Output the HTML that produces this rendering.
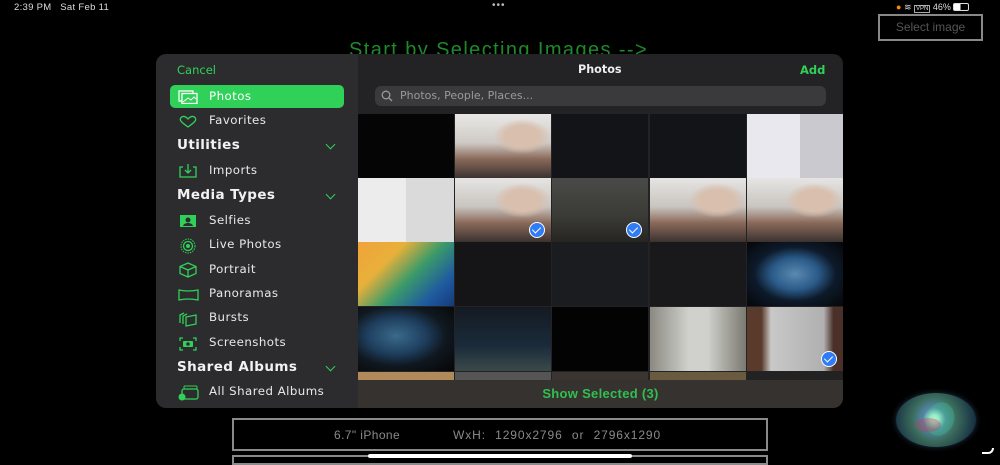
<!DOCTYPE html>
<html><head><meta charset="utf-8"><style>
*{margin:0;padding:0;box-sizing:border-box}
body{width:1000px;height:462px;background:#000;position:relative;overflow:hidden;font-family:"Liberation Sans",sans-serif;color:#fff}
.abs{position:absolute}
.sb{left:156px;top:54px;width:202px;height:354px;background:#2c2c2e;border-radius:10px 0 0 10px}
.main{left:358px;top:54px;width:485px;height:354px;background:#232325;border-radius:0 10px 10px 0;overflow:hidden}
.it{position:absolute;left:209px;font-family:"DejaVu Sans",sans-serif;font-size:11.8px;letter-spacing:.45px;color:#e8e8e8}
.hd{position:absolute;left:177px;font-family:"DejaVu Sans",sans-serif;font-size:13.5px;letter-spacing:.4px;font-weight:bold;color:#f2f2f2}
.chev{position:absolute;left:327px;width:7px;height:7px;border-right:1.5px solid #30d158;border-bottom:1.5px solid #30d158;transform:rotate(45deg)}
.ic{position:absolute;left:178px}
.c{position:absolute;width:96px;height:64px}
.chk{position:absolute;right:6px;bottom:4px;width:16px;height:16px;border-radius:50%;background:#2f7cf6;border:1.5px solid #fff}
.chk:after{content:"";position:absolute;left:4px;top:2px;width:4px;height:7px;border-right:1.5px solid #fff;border-bottom:1.5px solid #fff;transform:rotate(45deg)}
</style></head><body>
<div class="abs" style="left:14px;top:2px;font-size:9.5px;color:#ddd;letter-spacing:.3px">2:39 PM&nbsp;&nbsp;&nbsp;Sat Feb 11</div>
<div class="abs" style="left:492px;top:0px;font-size:10px;color:#bbb;letter-spacing:1px">•••</div>
<div class="abs" style="left:896px;top:2px;font-size:9px;color:#ddd"><span style="color:#f80">●</span> ≋ <span style="border:1px solid #aaa;font-size:6px;padding:0 1px">VPN</span> 46% <span style="display:inline-block;width:16px;height:8px;border:1px solid #ddd;border-radius:2px;vertical-align:-1px;background:linear-gradient(90deg,#fff 46%,transparent 46%)"></span></div>
<div class="abs" style="left:878px;top:14px;width:105px;height:27px;border:2px solid #888;color:#555;font-size:12px;text-align:center;line-height:23px">Select image</div>
<div class="abs" style="left:349px;top:39px;font-size:20px;letter-spacing:1.4px;color:#1f8a2a">Start by Selecting Images --&gt;</div>

<div class="abs sb"></div>
<div class="abs main">
<div class="abs" style="left:17px;top:32px;width:451px;height:20px;background:#3a3a3c;border-radius:6px;font-family:'DejaVu Sans',sans-serif;font-size:11px;color:#9a9a9e;line-height:20px;padding-left:25px">Photos, People, Places...</div>
<svg class="abs" style="left:23px;top:36px" width="12" height="12"><circle cx="5" cy="5" r="3.8" fill="none" stroke="#9a9a9e" stroke-width="1.3"/><line x1="8" y1="8" x2="11" y2="11" stroke="#9a9a9e" stroke-width="1.3"/></svg>
</div>
<div class="abs" style="left:177px;top:63px;font-family:'DejaVu Sans',sans-serif;font-size:11.5px;color:#30d158">Cancel</div>
<div class="abs" style="left:578px;top:63px;font-family:'DejaVu Sans',sans-serif;font-size:11.2px;font-weight:bold;color:#eee">Photos</div>
<div class="abs" style="left:800px;top:63px;font-family:'DejaVu Sans',sans-serif;font-size:11.5px;font-weight:bold;color:#30d158">Add</div>

<div class="abs" style="left:170px;top:85px;width:174px;height:23px;background:#30d158;border-radius:5px"></div>
<svg class="ic" style="top:90px" width="22" height="14"><rect x="1" y="1" width="14" height="10" fill="none" stroke="#fff" stroke-width="1.3"/><rect x="4" y="3.5" width="15" height="10" fill="#30d158" stroke="#fff" stroke-width="1.3"/><path d="M5 12 L10 8 L13 10 L16 7 L18 9" fill="none" stroke="#fff"/></svg>
<div class="it" style="top:89px;color:#fff">Photos</div>
<svg class="ic" style="top:115px" width="20" height="14"><path d="M10 12 C3 7 1 5 3 2.5 C5 0.5 8 1.5 10 4 C12 1.5 15 0.5 17 2.5 C19 5 17 7 10 12Z" fill="none" stroke="#30d158" stroke-width="1.3"/></svg>
<div class="it" style="top:113px">Favorites</div>
<div class="hd" style="top:137px">Utilities</div><div class="chev" style="top:141px"></div>
<svg class="ic" style="top:163px" width="20" height="16"><path d="M5 4 H2 V14 H18 V4 H15 M10 1 V10 M7 7 L10 10 L13 7" fill="none" stroke="#30d158" stroke-width="1.3"/></svg>
<div class="it" style="top:163px">Imports</div>
<div class="hd" style="top:187px">Media Types</div><div class="chev" style="top:191px"></div>
<svg class="ic" style="top:213px" width="20" height="16"><rect x="2" y="2" width="16" height="12" fill="#30d158"/><circle cx="10" cy="7" r="2.5" fill="#2c2c2e"/><path d="M5 13 C6 9 14 9 15 13Z" fill="#2c2c2e"/></svg>
<div class="it" style="top:213px">Selfies</div>
<svg class="ic" style="top:238px" width="20" height="16"><circle cx="10" cy="8" r="7" fill="none" stroke="#30d158" stroke-dasharray="1.5 1"/><circle cx="10" cy="8" r="4.5" fill="none" stroke="#30d158" stroke-width="1.3"/><circle cx="10" cy="8" r="2" fill="#30d158"/></svg>
<div class="it" style="top:237px">Live Photos</div>
<svg class="ic" style="top:262px" width="20" height="16"><path d="M10 1 L18 4.5 V11.5 L10 15 L2 11.5 V4.5Z M2 4.5 L10 8 L18 4.5 M10 8 V15" fill="none" stroke="#30d158" stroke-width="1.3"/></svg>
<div class="it" style="top:262px">Portrait</div>
<svg class="ic" style="top:288px" width="22" height="14"><path d="M1 2 Q10 4 20 2 V12 Q10 10 1 12Z" fill="none" stroke="#30d158" stroke-width="1.3"/></svg>
<div class="it" style="top:286px">Panoramas</div>
<svg class="ic" style="top:311px" width="20" height="16"><path d="M2 12 V4 L6 2 M5 13 V5 L9 3 M8 15 V6 L18 4 V13 Z" fill="none" stroke="#30d158" stroke-width="1.3"/></svg>
<div class="it" style="top:310px">Bursts</div>
<svg class="ic" style="top:336px" width="20" height="16"><path d="M2 5 V2 H5 M15 2 H18 V5 M18 11 V14 H15 M5 14 H2 V11" fill="none" stroke="#30d158" stroke-width="1.3"/><rect x="5" y="5" width="10" height="6" rx="1" fill="#30d158"/><circle cx="10" cy="8" r="1.8" fill="#2c2c2e"/></svg>
<div class="it" style="top:335px">Screenshots</div>
<div class="hd" style="top:359px">Shared Albums</div><div class="chev" style="top:363px"></div>
<svg class="ic" style="top:385px" width="22" height="16"><rect x="6" y="1" width="13" height="3" rx="1" fill="none" stroke="#30d158"/><rect x="4" y="4" width="16" height="10" rx="2" fill="none" stroke="#30d158" stroke-width="1.3"/><circle cx="4" cy="12" r="3.5" fill="#30d158"/></svg>
<div class="it" style="top:384px">All Shared Albums</div>

<!-- grid -->
<div class="c" style="left:358px;top:114px;background:#050505"></div>
<div class="c" style="left:455px;top:114px;background:radial-gradient(ellipse at 70% 35%,#d9bfae 0 18%,transparent 30%),linear-gradient(180deg,#e9e8e6 0,#cfcac5 45%,#8a6a5a 70%,#3b3230)"></div>
<div class="c" style="left:552px;top:114px;background:#121418"></div>
<div class="c" style="left:650px;top:114px;background:#121418"></div>
<div class="c" style="left:747px;top:114px;background:linear-gradient(90deg,#e8e8ee 55%,#c9c9cf 55%)"></div>
<div class="c" style="left:358px;top:178px;background:linear-gradient(90deg,#ececec 50%,#dadada 50%)"></div>
<div class="c" style="left:455px;top:178px;background:radial-gradient(ellipse at 70% 35%,#d9bfae 0 18%,transparent 30%),linear-gradient(180deg,#e6e5e3 0,#c9c4bf 45%,#8a6a5a 70%,#3b3230)"><div class="chk"></div></div>
<div class="c" style="left:552px;top:178px;background:linear-gradient(180deg,#4a4a48,#3a3a36 60%,#262522)"><div class="chk"></div></div>
<div class="c" style="left:650px;top:178px;background:radial-gradient(ellipse at 70% 35%,#d9bfae 0 18%,transparent 30%),linear-gradient(180deg,#e6e5e3 0,#c9c4bf 45%,#8a6a5a 70%,#3b3230)"></div>
<div class="c" style="left:747px;top:178px;background:radial-gradient(ellipse at 70% 35%,#d9bfae 0 18%,transparent 30%),linear-gradient(180deg,#e6e5e3 0,#c9c4bf 45%,#8a6a5a 70%,#3b3230)"></div>
<div class="c" style="left:358px;top:242px;background:linear-gradient(135deg,#f0a33a 0,#e8b03a 30%,#3a9a6a 55%,#1f5aa0 80%,#153a7a)"></div>
<div class="c" style="left:455px;top:242px;background:#151517"></div>
<div class="c" style="left:552px;top:242px;background:#1b1c20"></div>
<div class="c" style="left:650px;top:242px;background:#19191b"></div>
<div class="c" style="left:747px;top:242px;background:radial-gradient(ellipse at 50% 50%,#5a8ab0 0,#2a5a88 35%,#0d1a2a 60%,#050608)"></div>
<div class="c" style="left:358px;top:307px;background:radial-gradient(ellipse at 40% 45%,#3a6a8a 0,#1f4060 35%,#101820 60%,#050505)"></div>
<div class="c" style="left:455px;top:307px;background:linear-gradient(180deg,#151a22,#1a2a3a 60%,#3a4a4a)"></div>
<div class="c" style="left:552px;top:307px;background:#030303"></div>
<div class="c" style="left:650px;top:307px;background:linear-gradient(90deg,#8a8a82,#d0d0cc 40%,#d0d0cc 60%,#7a7a70),#999"></div>
<div class="c" style="left:747px;top:307px;background:linear-gradient(90deg,#5a3a2a 15%,#c8c8c8 25%,#b0b0b0 80%,#4a3028 90%)"><div class="chk"></div></div>
<div class="c" style="left:358px;top:372px;height:8px;background:#b08a5a"></div>
<div class="c" style="left:455px;top:372px;height:8px;background:#555"></div>
<div class="c" style="left:552px;top:372px;height:8px;background:#3a3530"></div>
<div class="c" style="left:650px;top:372px;height:8px;background:#6a5a40"></div>
<div class="c" style="left:747px;top:372px;height:8px;background:#222"></div>
<div class="abs" style="left:358px;top:380px;width:485px;height:28px;background:rgba(55,52,50,.93);border-radius:0 0 10px 0;text-align:center;font-size:13px;font-weight:bold;color:#30c050;line-height:28px;letter-spacing:.3px">Show Selected (3)</div>

<div class="abs" style="left:232px;top:418px;width:536px;height:33px;border:2px solid #8a8a8a"></div>
<div class="abs" style="left:334px;top:428px;font-size:12px;color:#8a8a8a;letter-spacing:.4px">6.7" iPhone</div>
<div class="abs" style="left:453px;top:428px;font-size:12px;color:#8a8a8a;word-spacing:5px;letter-spacing:.9px">WxH: 1290x2796 or 2796x1290</div>
<div class="abs" style="left:232px;top:455px;width:536px;height:10px;border:2px solid #8a8a8a"></div>
<div class="abs" style="left:368px;top:454px;width:264px;height:4px;background:#fff;border-radius:2px"></div>

<div class="abs" style="left:896px;top:393px;width:80px;height:54px;border-radius:50%;background:radial-gradient(circle at 48% 48%,#fff 0,#cfe 8%,#58a 22%,#3a6a5a 45%,#1d3a48 75%,#0a1520);box-shadow:0 0 6px #234"></div>
<div class="abs" style="left:926px;top:402px;width:28px;height:34px;border-radius:50%;background:rgba(60,200,130,.35);transform:rotate(20deg)"></div>
<div class="abs" style="left:915px;top:418px;width:26px;height:14px;border-radius:50%;background:rgba(200,60,90,.35)"></div>
<div class="abs" style="left:982px;top:448px;width:12px;height:6px;border-bottom:2.5px solid #fff;border-right:2.5px solid #fff;border-radius:0 0 8px 0"></div>
</body></html>
